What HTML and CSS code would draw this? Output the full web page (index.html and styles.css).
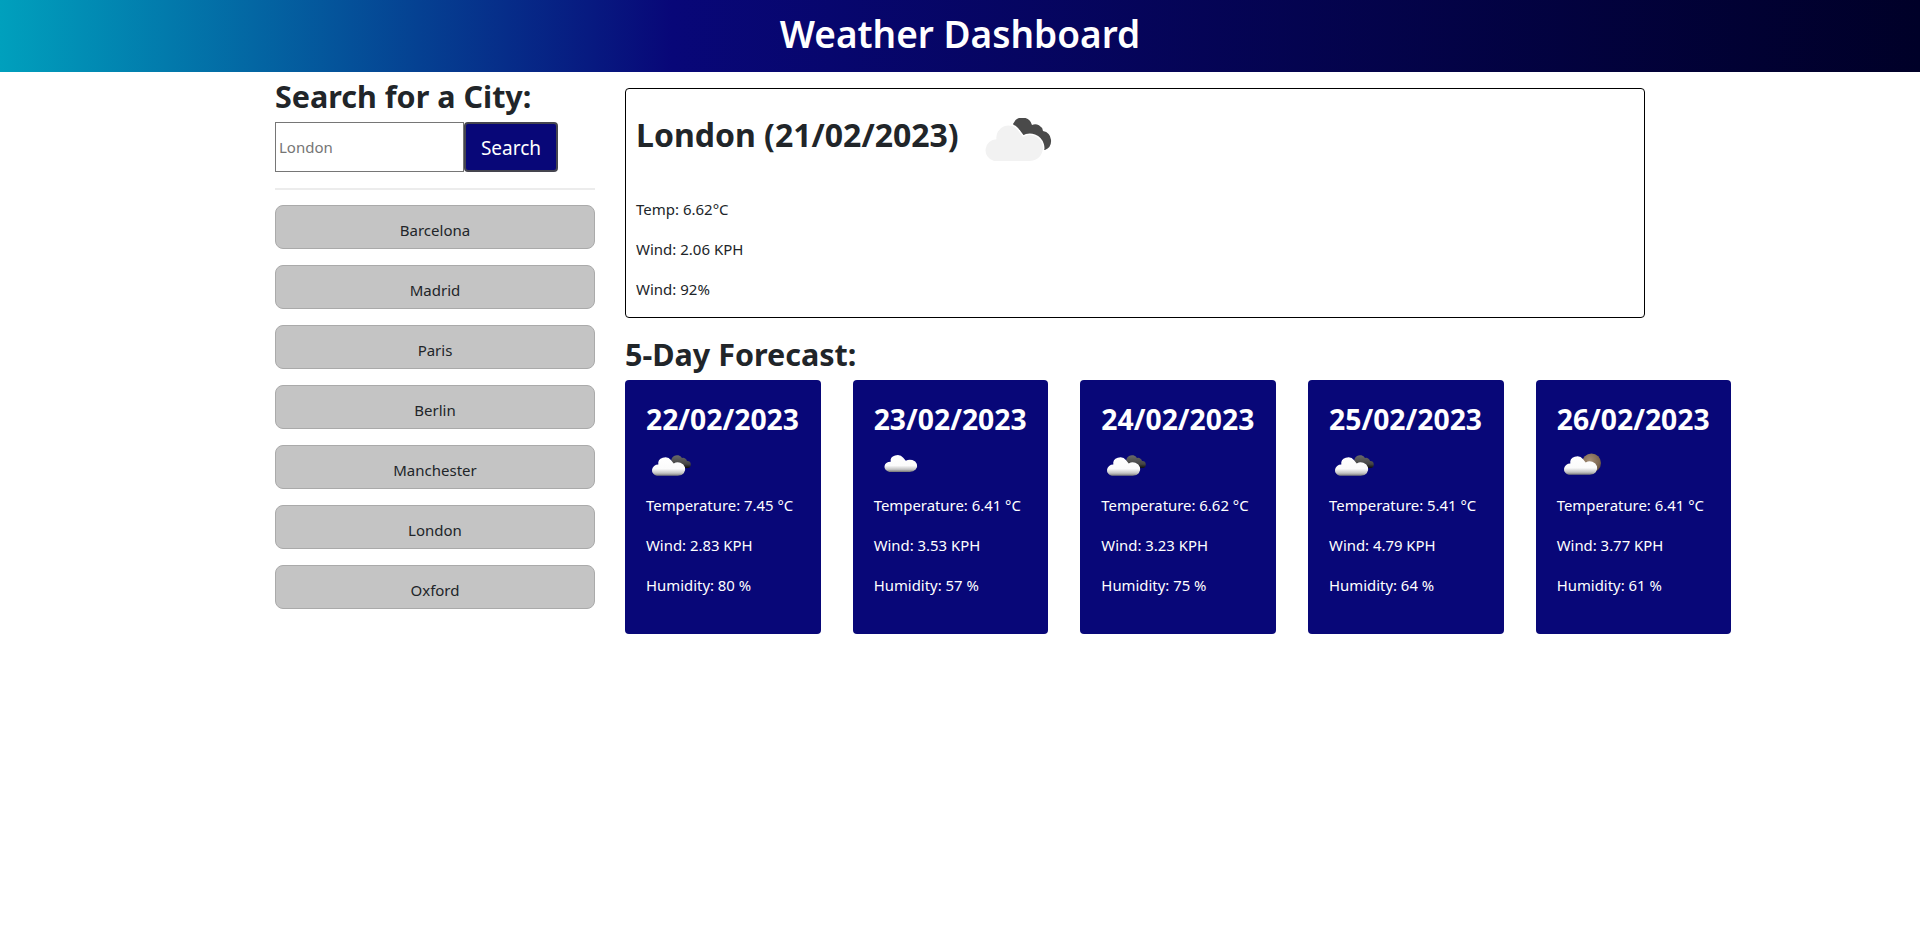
FILE: index.html
```html
<!DOCTYPE html>
<html lang="en">
<head>
  <meta charset="UTF-8" />
  <meta name="viewport" content="width=device-width, initial-scale=1.0"/>
  <title>Weather Dashboard</title>
  <link rel="stylesheet" href="styles.css">
</head>
<body>

  <!-- Shared icon shapes -->
  <svg class="icon-defs" width="0" height="0" aria-hidden="true">
    <defs>
      <linearGradient id="cloudShade" x1="0" y1="0" x2="0" y2="1">
        <stop offset="0" stop-color="#ffffff"/>
        <stop offset="0.62" stop-color="#fbfbfb"/>
        <stop offset="0.85" stop-color="#c4c4c4"/>
        <stop offset="1" stop-color="#777777"/>
      </linearGradient>
      <linearGradient id="darkShade" x1="0" y1="0" x2="0" y2="1">
        <stop offset="0" stop-color="#6a6a6a"/>
        <stop offset="0.7" stop-color="#444444"/>
        <stop offset="1" stop-color="#0c0c0c"/>
      </linearGradient>
      <radialGradient id="moonShade" cx="0.4" cy="0.35" r="0.7">
        <stop offset="0" stop-color="#a58e76"/>
        <stop offset="0.75" stop-color="#7b654f"/>
        <stop offset="1" stop-color="#5a4a3a"/>
      </radialGradient>
      <path id="cloudBody" d="M11 43A11 11 0 0 1 13.500 21.300A12 12 0 0 1 35.500 13L40 19A13 13 0 1 1 47 43z"/>
      <path id="cloudDark" d="M30 6a10 10 0 0 1 19 1a8 8 0 0 1 11 6a10 10 0 0 1 2 19H45L35 15z"/>
      <path id="cloudDarkSmall" d="M26 24a5.500 5.500 0 0 1 10-6a4 4 0 0 1 5 3a3.500 3.500 0 0 1 .5 7H28z"/>
    </defs>
  </svg>

  <header class="page-header">
    <h1>Weather Dashboard</h1>
  </header>

  <main class="layout">
    <aside class="sidebar">
      <h3>Search for a City:</h3>
      <form class="search-form">
        <input type="text" placeholder="London">
        <button type="submit">Search</button>
      </form>
      <hr>
      <div class="city-list">
        <button class="city-btn">Barcelona</button>
        <button class="city-btn">Madrid</button>
        <button class="city-btn">Paris</button>
        <button class="city-btn">Berlin</button>
        <button class="city-btn">Manchester</button>
        <button class="city-btn">London</button>
        <button class="city-btn">Oxford</button>
      </div>
    </aside>

    <section class="results">
      <div class="current">
        <div class="current-title">
          <h2>London (21/02/2023)</h2>
          <svg class="current-icon" viewBox="0 0 70 46" width="70" height="46" aria-label="Broken clouds">
            <use href="#cloudDark" fill="#4a4a4a"/>
            <use href="#cloudBody" fill="#f2f2f2" stroke="#ffffff" stroke-width="3" paint-order="stroke"/>
          </svg>
        </div>
        <p>Temp: 6.62°C</p>
        <p>Wind: 2.06 KPH</p>
        <p>Wind: 92%</p>
      </div>

      <h3 class="forecast-title">5-Day Forecast:</h3>
      <div class="forecast">
        <div class="day-card">
          <h4>22/02/2023</h4>
          <svg class="day-icon" viewBox="0 0 50 50" width="50" height="50" aria-label="Broken clouds">
            <use href="#cloudDarkSmall" fill="url(#darkShade)"/>
            <use href="#cloudBody" fill="url(#cloudShade)" transform="translate(4.500 13.500) scale(.58 .52)"/>
          </svg>
          <p>Temperature: 7.45 °C</p>
          <p>Wind: 2.83 KPH</p>
          <p>Humidity: 80 %</p>
        </div>
        <div class="day-card">
          <h4>23/02/2023</h4>
          <svg class="day-icon" viewBox="0 0 50 50" width="50" height="50" aria-label="Few clouds">
            <use href="#cloudBody" fill="url(#cloudShade)" transform="translate(9 11.700) scale(.57 .47)"/>
          </svg>
          <p>Temperature: 6.41 °C</p>
          <p>Wind: 3.53 KPH</p>
          <p>Humidity: 57 %</p>
        </div>
        <div class="day-card">
          <h4>24/02/2023</h4>
          <svg class="day-icon" viewBox="0 0 50 50" width="50" height="50" aria-label="Broken clouds">
            <use href="#cloudDarkSmall" fill="url(#darkShade)"/>
            <use href="#cloudBody" fill="url(#cloudShade)" transform="translate(4.500 13.500) scale(.58 .52)"/>
          </svg>
          <p>Temperature: 6.62 °C</p>
          <p>Wind: 3.23 KPH</p>
          <p>Humidity: 75 %</p>
        </div>
        <div class="day-card">
          <h4>25/02/2023</h4>
          <svg class="day-icon" viewBox="0 0 50 50" width="50" height="50" aria-label="Broken clouds">
            <use href="#cloudDarkSmall" fill="url(#darkShade)"/>
            <use href="#cloudBody" fill="url(#cloudShade)" transform="translate(4.500 13.500) scale(.58 .52)"/>
          </svg>
          <p>Temperature: 5.41 °C</p>
          <p>Wind: 4.79 KPH</p>
          <p>Humidity: 64 %</p>
        </div>
        <div class="day-card">
          <h4>26/02/2023</h4>
          <svg class="day-icon" viewBox="0 0 50 50" width="50" height="50" aria-label="Scattered clouds">
            <circle cx="34.500" cy="23" r="9.500" fill="url(#moonShade)"/>
            <use href="#cloudBody" fill="url(#cloudShade)" transform="translate(5.500 12.500) scale(.58 .52)"/>
          </svg>
          <p>Temperature: 6.41 °C</p>
          <p>Wind: 3.77 KPH</p>
          <p>Humidity: 61 %</p>
        </div>
      </div>
    </section>
  </main>

</body>
</html>
```

FILE: styles.css
```css
body {
  font-family: "Noto Sans", "Open Sans", sans-serif;
  font-size: 16px;
  line-height: 1.5;
  color: #212529;
  background-color: #ffffff;
  margin: 0;
  padding: 0;
}

h1, h2, h3, h4, p {
  margin: 0;
}

.icon-defs {
  display: block;
}

.page-header {
  height: 72px;
  display: flex;
  align-items: center;
  justify-content: center;
  background: linear-gradient(to right, #00a0bd 0%, #080778 35%, #000028 100%);
}

.page-header h1 {
  color: #ffffff;
  font-size: 37px;
  font-weight: 600;
  line-height: 1.2;
  margin-bottom: 4px;
}

.layout {
  display: grid;
  grid-template-columns: 320px 1106.4px;
  column-gap: 30px;
  padding: 0 0 0 275px;
}

/* Left column */
.sidebar h3 {
  font-size: 30.5px;
  font-weight: 700;
  line-height: 36px;
  margin-top: 6px;
  margin-bottom: 8px;
}

.search-form {
  display: flex;
  height: 50px;
}

.search-form input {
  width: 189px;
  box-sizing: border-box;
  padding: 1px 3px;
  border: 1px solid #767676;
  font-family: inherit;
  font-size: 15px;
  color: #212529;
}

.search-form input::placeholder {
  color: #757575;
}

.search-form button {
  width: 94px;
  box-sizing: border-box;
  padding: 2px 0 0;
  background-color: #080778;
  color: #ffffff;
  border: 2px solid #45454f;
  border-radius: 4px;
  font-family: inherit;
  font-size: 19px;
}

.sidebar hr {
  border: none;
  border-top: 2px solid #ececec;
  margin: 16px 0 15px;
}

.city-list {
  display: flex;
  flex-direction: column;
  gap: 16px;
}

.city-btn {
  height: 44px;
  padding: 6px 0 0;
  background-color: #c4c4c4;
  border: 1px solid #aaaaaa;
  border-radius: 8px;
  font-family: inherit;
  font-size: 15px;
  color: #212529;
}

/* Right column */
.current {
  box-sizing: border-box;
  width: 1020px;
  height: 230px;
  margin-top: 16px;
  padding: 0 10px;
  border: 1px solid #000000;
  border-radius: 4px;
}

.current-title {
  display: flex;
  align-items: center;
  gap: 24px;
  height: 92px;
  margin-bottom: 16px;
}

.current-title h2 {
  font-size: 32px;
  font-weight: 700;
  line-height: 1.2;
}

.current-icon {
  margin-top: 12px;
}

.current p {
  font-size: 15px;
  line-height: 24px;
  margin-bottom: 16px;
}

.forecast-title {
  font-size: 30.5px;
  font-weight: 700;
  line-height: 36px;
  margin-top: 18px;
  margin-bottom: 8px;
}

.forecast {
  display: grid;
  grid-template-columns: repeat(5, 1fr);
  column-gap: 32px;
}

.day-card {
  height: 254px;
  box-sizing: border-box;
  padding: 23px 10px 0 21px;
  background-color: #080778;
  border-radius: 4px;
  color: #ffffff;
}

.day-card h4 {
  font-size: 28.3px;
  font-weight: 700;
  line-height: 32px;
  white-space: nowrap;
}

.day-icon {
  display: block;
  margin-top: 5px;
  margin-bottom: 3px;
}

.day-card p {
  font-size: 14.9px;
  line-height: 24px;
  margin-bottom: 16px;
  white-space: nowrap;
}
```
